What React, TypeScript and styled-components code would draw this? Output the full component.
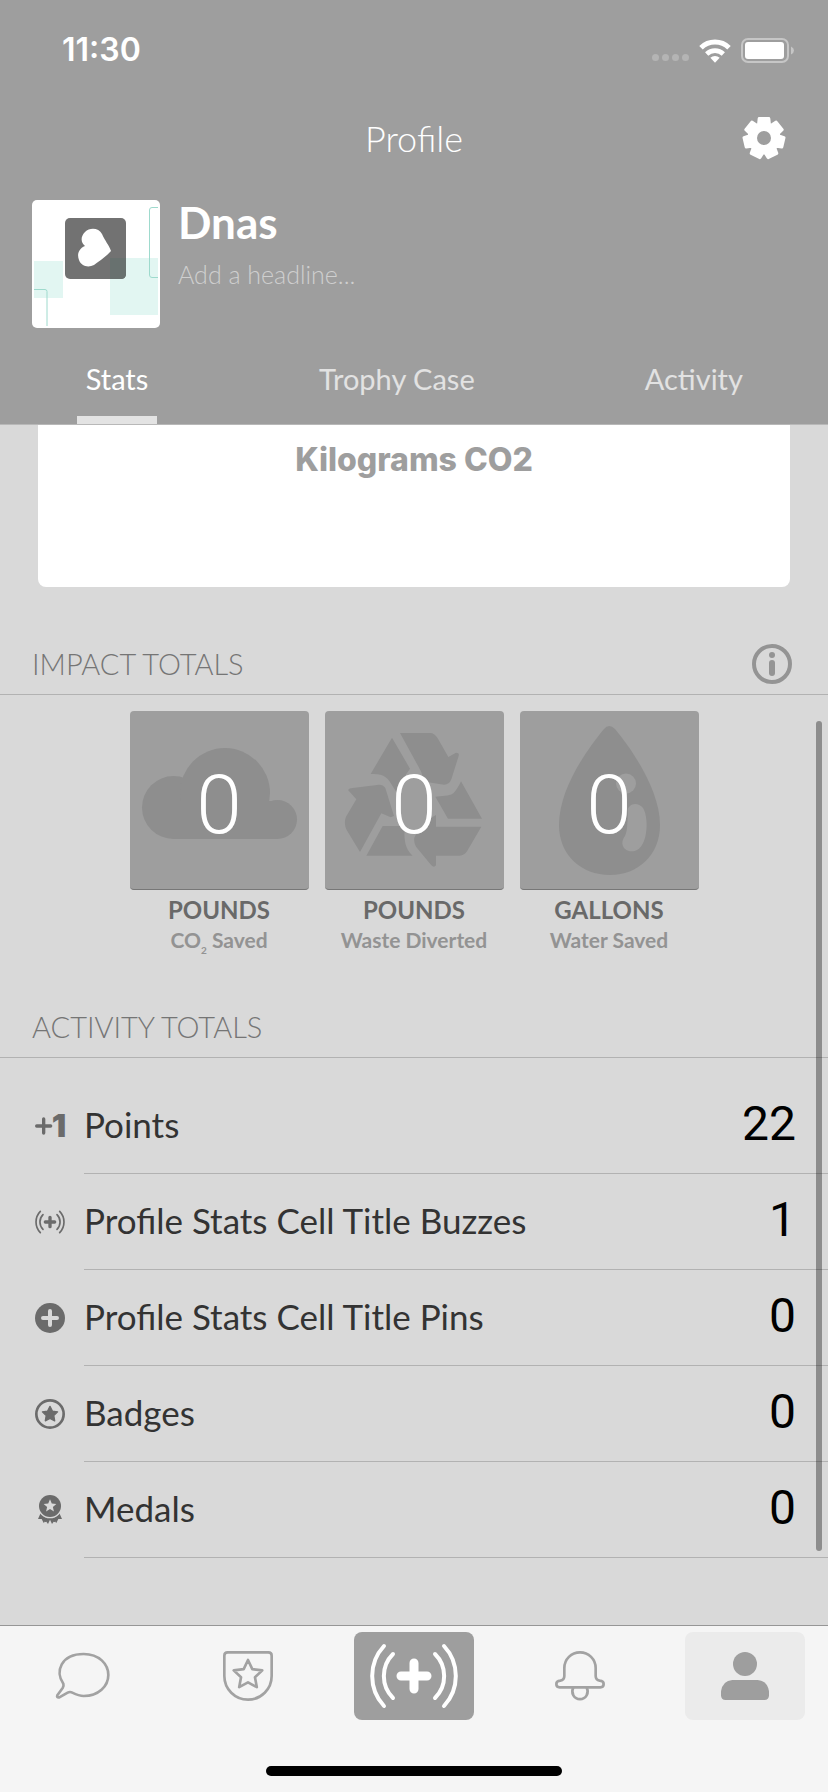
import React from "react";
import styled, { createGlobalStyle } from "styled-components";

const color = {
  header: "#9e9e9e",
  page: "#d9d9d9",
  line: "#b2b2b2",
  heading: "#757575",
  icon: "#6b6b6b",
  tileArt: "#8e8e8e",
  bar: "#f5f5f5",
};

const Global = createGlobalStyle`
  * { box-sizing: border-box; }
  body { margin: 0; background: ${color.page}; font-family: Lato, "Open Sans", sans-serif; }
  button { font: inherit; border: 0; padding: 0; background: none; color: inherit; cursor: pointer; }
  svg { display: block; }
  h1, h2, p, ul { margin: 0; padding: 0; font-weight: inherit; }
`;

const Screen = styled.div`
  display: flex;
  flex-direction: column;
  min-height: 100vh;
`;

const Header = styled.header`
  background: ${color.header};
  color: #fff;
  border-bottom: 1px solid #b8b8b8;
`;

const StatusBar = styled.div`
  display: flex;
  justify-content: space-between;
  align-items: center;
  height: 96px;
  padding: 4px 34px 0 62px;
`;

const Clock = styled.time`
  font: 600 32px/40px Inter, sans-serif;
`;

const StatusIcons = styled.div`
  display: flex;
  align-items: center;
  gap: 10px;
`;

const SignalDots = styled.span`
  display: flex;
  align-self: flex-end;
  gap: 3px;
  padding-bottom: 2px;
`;

const Dot = styled.i`
  width: 7px;
  height: 7px;
  border-radius: 50%;
  background: #b4b4b4;
`;

const TitleBar = styled.div`
  display: grid;
  grid-template-columns: 1fr auto 1fr;
  align-items: center;
  height: 84px;
  padding: 0 42px;
`;

const Title = styled.h1`
  grid-column: 2;
  font-size: 36px;
  line-height: 44px;
  font-weight: 300;
`;

const SettingsButton = styled.button`
  justify-self: end;
`;

const Identity = styled.section`
  display: flex;
  gap: 18px;
  padding: 20px 32px 0;
`;

const Avatar = styled.div`
  width: 128px;
  height: 128px;
  border-radius: 5px;
  background: #fff;
  overflow: hidden;
`;

const IdentityText = styled.div`
  flex: 1;
  display: flex;
  flex-direction: column;
`;

const Name = styled.h2`
  font-size: 44px;
  line-height: 44px;
  font-weight: 700;
`;

const Headline = styled.input`
  width: 100%;
  height: 32px;
  margin-top: 14px;
  padding: 0;
  border: 0;
  outline: 0;
  background: none;
  color: #fff;
  font: 300 25px/32px Lato, sans-serif;
  &::placeholder { color: #cfcfcf; opacity: 1; }
`;

const Tabs = styled.nav`
  display: flex;
  justify-content: space-around;
  height: 96px;
`;

const Tab = styled.button<{ $active?: boolean }>`
  padding: 14px 8px 0;
  min-width: 80px;
  font-size: 29px;
  line-height: 36px;
  color: ${(p) => (p.$active ? "#fff" : "#e2e2e2")};
  border-bottom: 8px solid ${(p) => (p.$active ? "#e3e3e3" : "transparent")};
`;

const Content = styled.main`
  position: relative;
  flex: 1;
  background: ${color.page};
`;

const ChartCard = styled.section`
  height: 162px;
  margin: 0 38px;
  padding-top: 15px;
  border-radius: 0 0 8px 8px;
  background: #fff;
  color: ${color.header};
  text-align: center;
  font: 800 32px/40px Inter, sans-serif;
`;

const SectionHead = styled.div<{ $gap: number }>`
  display: flex;
  justify-content: space-between;
  align-items: center;
  height: 60px;
  margin-top: ${(p) => p.$gap}px;
  padding: 0 36px 2px 32px;
  border-bottom: 1px solid ${color.line};
`;

const SectionTitle = styled.h2`
  font-size: 29px;
  line-height: 36px;
  font-weight: 300;
  color: ${color.heading};
`;

const TileRow = styled.div`
  display: flex;
  justify-content: center;
  gap: 16px;
  margin-top: 16px;
`;

const TileItem = styled.article`
  width: 179px;
  text-align: center;
  white-space: nowrap;
`;

const TileFace = styled.div`
  display: grid;
  height: 179px;
  border-radius: 4px;
  background: ${color.header};
  border-bottom: 1px solid #777;
  > * { grid-area: 1 / 1; }
`;

const TileValue = styled.p`
  align-self: center;
  padding-top: 10px;
  font: 300 82px/96px Roboto, sans-serif;
  color: #fff;
`;

const TileUnit = styled.p`
  margin-top: 4px;
  font-size: 24px;
  line-height: 32px;
  font-weight: 700;
  color: #696969;
`;

const TileNote = styled.p`
  height: 30px;
  font-size: 21px;
  line-height: 28px;
  font-weight: 700;
  color: #939393;
  sub { font-size: 10px; line-height: 0; vertical-align: -6px; }
`;

const TotalsList = styled.ul`
  margin-top: 20px;
  padding-bottom: 67px;
  list-style: none;
`;

const TotalRow = styled.li`
  display: flex;
  align-items: center;
  gap: 19px;
  height: 96px;
  padding-left: 35px;
`;

const TotalBody = styled.div`
  flex: 1;
  display: flex;
  justify-content: space-between;
  align-items: center;
  height: 96px;
  padding: 0 32px 3px 0;
  border-bottom: 1px solid ${color.line};
`;

const TotalLabel = styled.span`
  font-size: 35px;
  line-height: 44px;
  color: #333;
`;

const TotalValue = styled.span`
  font: 400 48px/56px Roboto, sans-serif;
  color: #000;
`;

const ScrollThumb = styled.div`
  position: absolute;
  top: 296px;
  bottom: 74px;
  right: 6px;
  width: 6px;
  border-radius: 3px;
  background: rgba(0, 0, 0, 0.35);
`;

const BottomBar = styled.footer`
  background: ${color.bar};
  border-top: 1px solid #969696;
  padding: 6px 0 16px;
`;

const BottomNav = styled.nav`
  display: grid;
  grid-template-columns: repeat(5, 1fr);
  justify-items: center;
`;

const NavButton = styled.button<{ $fill?: string }>`
  display: grid;
  place-items: center;
  width: 120px;
  height: 88px;
  border-radius: 8px;
  background: ${(p) => p.$fill ?? "none"};
`;

const HomeIndicator = styled.div`
  width: 296px;
  height: 10px;
  margin: 46px auto 0;
  border-radius: 5px;
  background: #000;
`;

const starPoints = (cx: number, cy: number, outer: number, inner: number) =>
  Array.from({ length: 10 }, (_, i) => {
    const r = i % 2 ? inner : outer;
    const a = (Math.PI * i) / 5 - Math.PI / 2;
    return `${(cx + r * Math.cos(a)).toFixed(1)},${(cy + r * Math.sin(a)).toFixed(1)}`;
  }).join(" ");

const gearPoints = () => {
  const points: string[] = [];
  const at = (deg: number, r: number) => {
    const a = ((deg - 90) * Math.PI) / 180;
    points.push(`${(22 + r * Math.cos(a)).toFixed(2)},${(22 + r * Math.sin(a)).toFixed(2)}`);
  };
  for (let i = 0; i < 7; i++) {
    const c = (i * 360) / 7;
    at(c - 21, 15);
    at(c - 14, 20);
    at(c + 14, 20);
    at(c + 21, 15);
  }
  return points.join(" ");
};

const GearIcon = () => (
  <svg width="44" height="44" viewBox="0 0 44 44">
    <polygon points={gearPoints()} fill="#fff" stroke="#fff" strokeWidth="3" strokeLinejoin="round" />
    <circle cx="22" cy="22" r="7" fill={color.header} />
  </svg>
);

const WifiIcon = () => (
  <svg width="32" height="25" viewBox="178 50 96 75" fill="none" stroke="#fff">
    <path d="M184 79A60 60 0 0 1 268 79" strokeWidth="15" />
    <path d="M201 98A36 36 0 0 1 251 98" strokeWidth="14" />
    <path d="M226 124L212 109A21 21 0 0 1 240 109Z" fill="#fff" stroke="none" />
  </svg>
);

const BatteryIcon = () => (
  <svg width="53" height="25" viewBox="0 0 53 25">
    <rect x="1" y="1" width="46" height="23" rx="6" fill="none" stroke="#c6c6c6" strokeWidth="2" />
    <rect x="4" y="4" width="39" height="17" rx="3" fill="#fff" />
    <path d="M50 8.500Q53 10 53 12.500T50 16.500Z" fill="#c6c6c6" />
  </svg>
);

const AvatarArt = () => (
  <svg width="128" height="128" viewBox="0 0 128 128">
    <rect x="2" y="61" width="29" height="37" fill="#e2f6f2" />
    <rect x="78" y="58" width="48" height="57" fill="#e2f6f2" />
    <path d="M126 7.500H120Q117.500 7.500 117.500 10V75Q117.500 77.500 120 77.500H126M2 89.500H13Q15 89.500 15 91.500V126" fill="none" stroke="#9edacd" />
    <rect x="33" y="18" width="61" height="61" rx="5" fill="#727272" />
    <path d="M78 58H94V74Q94 79 89 79H78Z" fill="#68716f" />
    <path d="M79 51C77 45 73 41 70 34C67 28 58 27 53 32C48 37 49 43 53 46C46 49 45 55 47 60C49 66 56 68 62 65C67 61 74 57 79 51Z" fill="#fff" />
  </svg>
);

const InfoIcon = () => (
  <svg width="40" height="40" viewBox="0 0 40 40" fill="#949494">
    <circle cx="20" cy="20" r="18" fill="none" stroke="#949494" strokeWidth="4" />
    <circle cx="20" cy="11" r="3" />
    <rect x="17" y="16" width="6" height="16" rx="3" />
  </svg>
);

const CloudArt = () => (
  <svg width="179" height="178" viewBox="0 0 179 178" fill={color.tileArt}>
    <circle cx="43.500" cy="96.500" r="31.500" />
    <circle cx="95" cy="82" r="45" />
    <circle cx="147.500" cy="108.500" r="19.500" />
    <rect x="43" y="90" width="105" height="38" />
  </svg>
);

const RecycleArt = () => (
  <svg width="179" height="178" viewBox="3 33 537 534" fill={color.tileArt}>
    <path d="M204 113L140 222C180 220 192 232 208 262L226 290L234 240L258 206Z" />
    <path d="M228 99H318Q332 99 342 116L373 171L396 158Q407 158 404 168L382 238Q376 254 360 254L303 245L290 212Z" />
    <path d="M411 244L474 356H372L334 290Q380 288 388 280Q400 268 411 244Z" />
    <path d="M472 380L430 452Q422 466 406 467H336V496Q330 504 322 496L276 440Q265 420 275 405L324 352L336 345V380Z" />
    <path d="M176 378H245Q238 400 244 430Q250 455 266 467H127Z" />
    <path d="M72 270Q76 264 86 264L165 254Q178 254 184 264L210 348L200 352L172 340L108 456L68 390Q58 370 66 350L97 298Z" />
  </svg>
);

const DropArt = () => (
  <svg width="179" height="178" viewBox="0 0 179 178">
    <path d="M84 18Q89 12 95 18C110 36 140 78 140 114C140 144 118 164 90 164C61 164 39 144 39 114C39 78 66 40 84 18Z" fill={color.tileArt} />
    <circle cx="106" cy="72.500" r="10" fill={color.header} />
    <path d="M109 96C112 92 119 92 123 97C128 105 128 125 122 134C118 141 110 142 105 138C101 134 102 129 105 125C108 119 107 110 108 104C108 100 107 98 109 96Z" fill={color.header} />
  </svg>
);

const RowSvg = styled.svg`
  overflow: visible;
`;

const RowIcon = ({ children }: { children: React.ReactNode }) => (
  <RowSvg width="30" height="30" viewBox="0 0 90 90" fill={color.icon} aria-hidden="true">
    {children}
  </RowSvg>
);

const PointsIcon = () => (
  <RowIcon>
    <path d="M5 45H47M26 24V66" stroke={color.icon} strokeWidth="10" strokeLinecap="round" />
    <text x="94" y="79" textAnchor="end" fontFamily="Inter" fontWeight="900" fontSize="96">1</text>
  </RowIcon>
);

const BuzzRowIcon = () => (
  <RowIcon>
    <g fill="none" stroke={color.icon} strokeLinecap="round">
      <path d="M16 13A46 46 0 0 0 16 77M74 13A46 46 0 0 1 74 77M24 23A31 31 0 0 0 24 67M66 23A31 31 0 0 1 66 67" strokeWidth="5" />
      <path d="M31 45H59M45 31V59" strokeWidth="10" />
    </g>
  </RowIcon>
);

const PinIcon = () => (
  <RowIcon>
    <circle cx="45" cy="45" r="45" />
    <path d="M24 45H66M45 24V66" stroke={color.page} strokeWidth="12" strokeLinecap="round" />
  </RowIcon>
);

const BadgeIcon = () => (
  <RowIcon>
    <circle cx="45" cy="45" r="41" fill="none" stroke={color.icon} strokeWidth="8" />
    <polygon points={starPoints(45, 46, 24, 12)} stroke={color.icon} strokeWidth="4" strokeLinejoin="round" />
  </RowIcon>
);

const MedalIcon = () => (
  <RowIcon>
    <path d="M17 54Q24 66 36 70L26 84L20 72L9 72ZM73 54Q66 66 54 70L64 84L70 72L81 72Z" />
    <path d="M32 66H58L62 82L56 80L51 87L45 74L39 87L34 80L28 82Z" />
    <circle cx="45" cy="33" r="35" fill="none" stroke={color.page} strokeWidth="4" />
    <circle cx="45" cy="33" r="33" />
    <polygon points={starPoints(45, 33, 20, 9)} fill={color.page} />
  </RowIcon>
);

const ChatIcon = () => (
  <svg width="56" height="48" viewBox="166 151 168 144" fill="none" stroke="#a2a2a2" strokeWidth="8" strokeLinejoin="round">
    <path d="M191 246C165 210 184 157 252 157C298 157 326 187 326 220C326 254 296 283 252 283C238 283 228 278 218 273Q211 269 204 273L179 287Q170 289 173 281L189 259Q193 253 191 246Z" />
  </svg>
);

const ShieldIcon = () => (
  <svg width="50" height="50" viewBox="672 153 150 150" fill="none" stroke="#a2a2a2" strokeWidth="8" strokeLinejoin="round">
    <path d="M686 157H808Q818 157 818 167V228A71 71 0 0 1 676 228V167Q676 157 686 157Z" />
    <polygon points={starPoints(747, 225, 45, 22)} />
  </svg>
);

const BuzzIcon = () => (
  <svg width="120" height="88" viewBox="0 0 120 88" fill="none" stroke="#fff" strokeLinecap="round">
    <path d="M30 14A44 44 0 0 0 30 74M90 14A44 44 0 0 1 90 74M39 22A31 31 0 0 0 39 66M81 22A31 31 0 0 1 81 66" strokeWidth="4" />
    <path d="M47 44H73M60 31V57" strokeWidth="9" />
  </svg>
);

const BellIcon = () => (
  <svg width="50" height="50" viewBox="420 153 150 150" fill="none" stroke="#a2a2a2" strokeWidth="8" strokeLinejoin="round">
    <path d="M448 228V204A47 47 0 0 1 542 204V228Q542 240 554 242Q566 243 566 252Q566 262 556 262H434Q424 262 424 252Q424 243 436 242Q448 240 448 228Z" />
    <path d="M475 263A23 23 0 1 0 515 263" />
  </svg>
);

const PersonIcon = () => (
  <svg width="48" height="48" viewBox="921 156 144 144" fill="#9e9e9e">
    <circle cx="993" cy="192" r="36" />
    <path d="M955 240H1031Q1060 242 1065 274V286Q1065 300 1051 300H935Q921 300 921 286V274Q926 242 955 240Z" />
  </svg>
);

const tiles = [
  { unit: "POUNDS", note: <>CO<sub>2</sub> Saved</>, art: <CloudArt /> },
  { unit: "POUNDS", note: "Waste Diverted", art: <RecycleArt /> },
  { unit: "GALLONS", note: "Water Saved", art: <DropArt /> },
];

const totals = [
  { label: "Points", value: 22, icon: <PointsIcon /> },
  { label: "Profile Stats Cell Title Buzzes", value: 1, icon: <BuzzRowIcon /> },
  { label: "Profile Stats Cell Title Pins", value: 0, icon: <PinIcon /> },
  { label: "Badges", value: 0, icon: <BadgeIcon /> },
  { label: "Medals", value: 0, icon: <MedalIcon /> },
];

export default function App() {
  return (
    <Screen>
      <Global />
      <Header>
        <StatusBar>
          <Clock>11:30</Clock>
          <StatusIcons>
            <SignalDots>
              <Dot />
              <Dot />
              <Dot />
              <Dot />
            </SignalDots>
            <WifiIcon />
            <BatteryIcon />
          </StatusIcons>
        </StatusBar>
        <TitleBar>
          <Title>Profile</Title>
          <SettingsButton aria-label="Settings">
            <GearIcon />
          </SettingsButton>
        </TitleBar>
        <Identity>
          <Avatar>
            <AvatarArt />
          </Avatar>
          <IdentityText>
            <Name>Dnas</Name>
            <Headline aria-label="Headline" placeholder="Add a headline..." />
          </IdentityText>
        </Identity>
        <Tabs>
          <Tab $active>Stats</Tab>
          <Tab>Trophy Case</Tab>
          <Tab>Activity</Tab>
        </Tabs>
      </Header>

      <Content>
        <ChartCard>Kilograms CO2</ChartCard>

        <SectionHead $gap={48}>
          <SectionTitle>IMPACT TOTALS</SectionTitle>
          <button aria-label="About impact totals">
            <InfoIcon />
          </button>
        </SectionHead>
        <TileRow>
          {tiles.map((tile, i) => (
            <TileItem key={i}>
              <TileFace>
                {tile.art}
                <TileValue>0</TileValue>
              </TileFace>
              <TileUnit>{tile.unit}</TileUnit>
              <TileNote>{tile.note}</TileNote>
            </TileItem>
          ))}
        </TileRow>

        <SectionHead $gap={42}>
          <SectionTitle>ACTIVITY TOTALS</SectionTitle>
        </SectionHead>
        <TotalsList>
          {totals.map((total) => (
            <TotalRow key={total.label}>
              {total.icon}
              <TotalBody>
                <TotalLabel>{total.label}</TotalLabel>
                <TotalValue>{total.value}</TotalValue>
              </TotalBody>
            </TotalRow>
          ))}
        </TotalsList>
        <ScrollThumb />
      </Content>

      <BottomBar>
        <BottomNav>
          <NavButton aria-label="Messages">
            <ChatIcon />
          </NavButton>
          <NavButton aria-label="Challenges">
            <ShieldIcon />
          </NavButton>
          <NavButton aria-label="New buzz" $fill={color.header}>
            <BuzzIcon />
          </NavButton>
          <NavButton aria-label="Notifications">
            <BellIcon />
          </NavButton>
          <NavButton aria-label="Profile" $fill="#ebebeb">
            <PersonIcon />
          </NavButton>
        </BottomNav>
        <HomeIndicator />
      </BottomBar>
    </Screen>
  );
}
